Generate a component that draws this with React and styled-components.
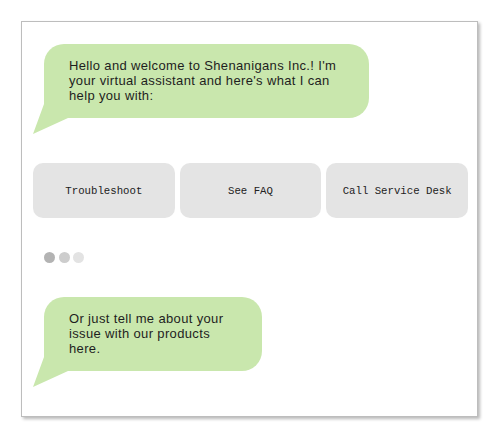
import styled, { createGlobalStyle } from "styled-components";

const GlobalStyle = createGlobalStyle`
  body {
    margin: 0;
    background: #fff;
  }
`;

const Page = styled.div`
  padding: 21px;
`;

const Frame = styled.div`
  box-sizing: border-box;
  width: 457px;
  height: 396px;
  border: 1px solid #bdbdbd;
  background: #fff;
  box-shadow: 2px 2px 3px rgba(0, 0, 0, 0.28);
  padding: 22px 9px 0 11px;
  display: flex;
  flex-direction: column;
`;

const Bubble = styled.div`
  position: relative;
  box-sizing: border-box;
  width: ${(p) => p.$width}px;
  margin-left: 11px;
  padding: 14px 20px 15px 25px;
  background: #c9e7ad;
  border-radius: 20px 20px 20px 0;
  font-family: "Liberation Sans", Arial, sans-serif;
  font-size: 13px;
  line-height: 15px;
  color: #1e1e1e;
  letter-spacing: 0.35px;

  &::before {
    content: "";
    position: absolute;
    left: -11px;
    bottom: -16px;
    width: 36px;
    height: 30px;
    background: #c9e7ad;
    clip-path: polygon(11px 0, 0 100%, 35px 14px, 11px 14px);
  }
`;

const Options = styled.div`
  display: grid;
  grid-template-columns: repeat(3, 1fr);
  gap: 5px;
  margin-top: 45px;
`;

const Option = styled.button`
  height: 55px;
  border: none;
  border-radius: 10px;
  background: #e4e4e4;
  font-family: "Liberation Mono", "Courier New", monospace;
  font-size: 10.7px;
  color: #222;
  cursor: pointer;
`;

const Dots = styled.div`
  display: flex;
  gap: 3.5px;
  margin: 34px 0 34px 11px;
`;

const Dot = styled.span`
  width: 11px;
  height: 11px;
  border-radius: 50%;
  background: ${(p) => p.$color};
`;

export default function App() {
  return (
    <Page>
      <GlobalStyle />
      <Frame>
        <Bubble $width={325}>
          Hello and welcome to Shenanigans Inc.! I'm your virtual assistant and
          here's what I can help you with:
        </Bubble>
        <Options>
          <Option>Troubleshoot</Option>
          <Option>See FAQ</Option>
          <Option>Call Service Desk</Option>
        </Options>
        <Dots>
          <Dot $color="#b3b3b3" />
          <Dot $color="#cdcdcd" />
          <Dot $color="#e3e3e3" />
        </Dots>
        <Bubble $width={218}>
          Or just tell me about your issue with our products here.
        </Bubble>
      </Frame>
    </Page>
  );
}
